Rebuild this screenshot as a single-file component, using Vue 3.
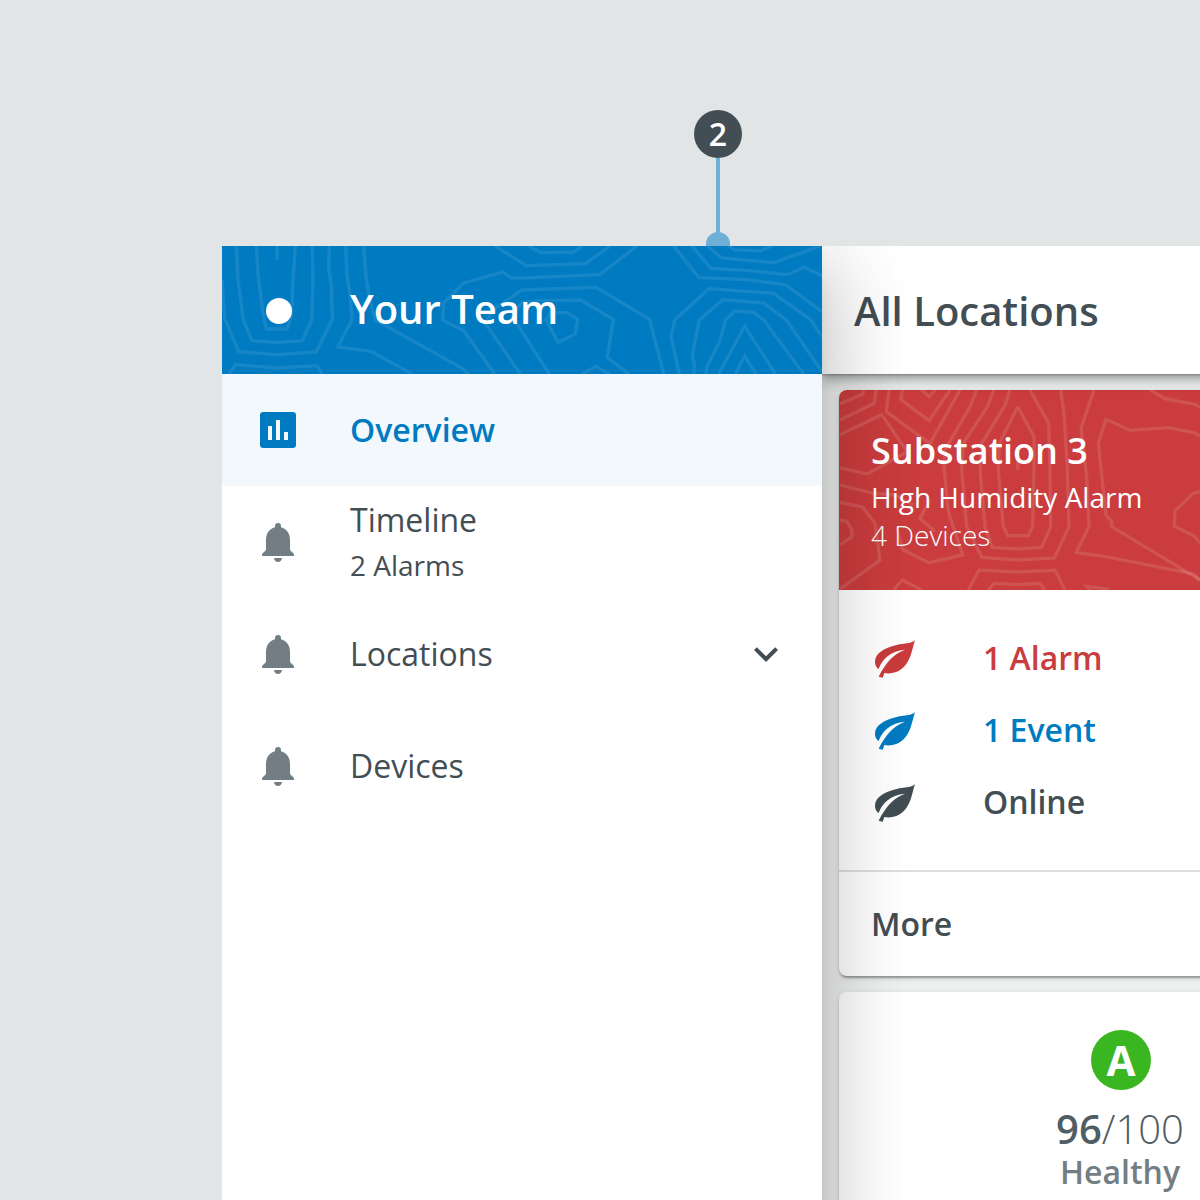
<script setup>
const nav = [
  { label: 'Timeline', sub: '2 Alarms' },
  { label: 'Locations', expandable: true },
  { label: 'Devices' },
]
const statuses = [
  { label: '1 Alarm', tone: 'alarm' },
  { label: '1 Event', tone: 'event' },
  { label: 'Online', tone: 'online' },
]
const blueContours = [
  '165,18 165,60',
  '103,18 108,100 122,215 133,267 195,267 209,225 212,140 220,18',
  '43,18 48,120 64,240 90,302 167,307 241,302 269,240 273,125 271,18',
  '0,120 8,235 50,335 167,344 283,336 331,238 328,135 320,85 322,18',
  '371,18 375,105 385,170 390,240 347,321 447,334 570,402',
  '425,18 432,110 443,180 461,240 722,386 740,402',
  '20,402 41,374 167,384 285,377 300,402',
  '820,18 912,77 1090,71 1165,18',
  '818,402 725,272 662,240 664,190 725,129 842,96 868,114 900,114 1133,104 1245,18',
  '895,402 790,250 812,210 900,150 1122,142 1283,238 1325,402',
  '982,402 900,275 870,228 900,188 960,182 1075,180 1174,238 1156,352 1220,402',
  '1008,307 972,240 985,218 1035,218 1067,238 1060,282 1008,307 972,240',
  '1080,402 1122,379 1162,402',
  '920,18 957,38 1055,36 1080,18',
  '1355,18 1431,113 1575,119 1690,134 1800,215',
  '1410,18 1467,85 1580,92 1695,104 1748,82 1800,107',
  '1455,18 1500,54 1655,68 1795,18',
  '1520,18 1537,29 1615,33 1650,18',
  '1372,402 1347,290 1358,240 1460,146 1655,160 1765,238 1800,290',
  '1415,402 1417,375 1411,345 1432,240 1502,179 1625,189 1693,240 1800,395',
  '1452,402 1455,380 1495,300 1510,240 1538,213 1595,217 1625,240 1745,402',
  '1490,402 1568,258 1660,402',
  '1540,402 1568,348 1602,402',
]
const redContours = [
  '30,72 98,42 101,30',
  '30,120 133,70 138,30',
  '30,164 155,104 232,215 112,282 30,263',
  '177,30 169,95 262,163 300,190 390,30',
  '217,30 212,58 297,122 360,30',
  '275,30 297,50 315,30',
  '440,30 420,80 345,210 342,260 355,395 398,525 297,548 217,508 200,440',
  '492,30 472,80 400,190 395,270 410,440 455,532 563,540 673,534 717,440 712,270 702,100 692,30',
  '540,30 525,75 455,190 450,270 465,440 487,502 563,507 635,502 662,440 660,270 656,130 600,30',
  '563,270 563,240',
  '563,80 508,190 505,270 520,440 533,467 595,467 608,440 612,270 612,170 563,80',
  '792,30 753,145 770,290 777,440 738,517 828,530 1092,582 1110,602',
  '30,315 130,340 195,345 250,375',
  '30,367 98,381 135,430 150,540 30,627',
  '30,420 50,424 66,450 66,470 30,495',
  '300,360 270,415 315,455',
  '190,630 217,600 275,630',
  '415,630 447,570 563,576 675,571 705,630',
  '475,630 493,610 563,614 630,610 645,630',
  '780,630 770,619 838,628',
  '960,30 1005,56 1095,73 1110,82',
  '1110,168 1092,158 1015,143 900,151 828,118 805,190 828,405 845,425 845,440 1110,600',
  '1110,335 1090,340 1035,392 1033,438 1095,470 1110,490',
]
</script>

<template>
  <div class="stage">
    <div class="callout">
      <span class="num">2</span>
      <span class="stem"></span>
      <span class="dot"></span>
    </div>
    <div class="app">
      <aside class="drawer">
        <header class="team">
          <svg class="topo" viewBox="0 18 1800 384" preserveAspectRatio="none">
            <polyline v-for="p in blueContours" :key="p" :points="p" />
          </svg>
          <span class="bullet"></span>
          <h1>Your Team</h1>
        </header>
        <nav>
          <div class="item active">
            <svg class="icon" viewBox="0 0 24 24"><path fill-rule="evenodd" d="M4.600 3h14.800A1.600 1.600 0 0 1 21 4.600v14.800a1.600 1.600 0 0 1-1.600 1.600H4.600A1.600 1.600 0 0 1 3 19.400V4.600A1.600 1.600 0 0 1 4.600 3zM7 10v7h2v-7zM11 7v10h2V7zM15 13v4h2v-4z" /></svg>
            <span class="label">Overview</span>
          </div>
          <div v-for="n in nav" :key="n.label" class="item">
            <svg class="icon" viewBox="0 0 48 48"><path d="M24 44c2.200 0 4-1.800 4-4h-8c0 2.200 1.800 4 4 4zM36 32V22c0-6.200-3.300-11.300-9-12.700V8a3 3 0 0 0-6 0v1.300C15.300 10.700 12 15.800 12 22v10l-4 4v2h32v-2z" /></svg>
            <span class="texts" :class="{ double: n.sub }">
              <span class="label">{{ n.label }}</span>
              <span v-if="n.sub" class="sub">{{ n.sub }}</span>
            </span>
            <svg v-if="n.expandable" class="chevron" viewBox="0 0 24 24"><path d="M7.410 8.590 12 13.170l4.590-4.580L18 10l-6 6-6-6z" /></svg>
          </div>
        </nav>
      </aside>
      <main>
        <header class="bar"><h2>All Locations</h2></header>
        <section class="card">
          <div class="hero">
            <svg class="topo" viewBox="27 30 1083 600" preserveAspectRatio="none">
              <polyline v-for="p in redContours" :key="p" :points="p" />
            </svg>
            <h3>Substation 3</h3>
            <p>High Humidity Alarm</p>
            <p class="thin">4 Devices</p>
          </div>
          <div class="statuses">
            <div v-for="s in statuses" :key="s.label" class="status" :class="s.tone">
              <svg viewBox="0 0 120 114"><path d="M120 1C103 15 73 7 35 25C13 35 0 48 0 66C0 76 5 84 11 87C20 60 45 32 90 29C58 41 34 64 11 110L23 113L28 99C62 105 91 89 106 49C112 33 115 14 120 1Z" /></svg>
              <span>{{ s.label }}</span>
            </div>
          </div>
          <div class="more">More</div>
        </section>
        <section class="card score">
          <span class="grade">A</span>
          <div class="points"><b>96</b>/100</div>
          <div class="health">Healthy</div>
        </section>
      </main>
    </div>
  </div>
</template>

<style>
body { margin: 0; overflow: hidden; }
</style>

<style scoped>
* { box-sizing: border-box; }
h1, h2, h3, p { margin: 0; }
.stage {
  width: 1200px;
  height: 1200px;
  overflow: hidden;
  background: #e1e5e5;
  color: #424e54;
  font-family: "Open Sans", "Noto Sans", sans-serif;
  display: flex;
  flex-direction: column;
}
.callout {
  height: 246px;
  flex: none;
  overflow: hidden;
  padding: 110px 0 0 694px;
  display: grid;
  grid-template-columns: 48px;
  grid-template-rows: 48px 74px 24px;
  justify-items: center;
}
.num {
  width: 48px;
  height: 48px;
  border-radius: 50%;
  background: #424e54;
  color: #fff;
  font: 600 32px/48px "Open Sans", sans-serif;
  text-align: center;
}
.stem { width: 4px; height: 76px; background: #6fafd6; }
.dot { width: 24px; height: 24px; border-radius: 50%; background: #6fafd6; }
.app {
  display: flex;
  width: 978px;
  height: 954px;
  margin-left: 222px;
  overflow: hidden;
  flex: none;
}
.drawer {
  position: relative;
  z-index: 2;
  width: 600px;
  height: 1100px;
  flex: none;
  background: #fff;
  box-shadow: 0 16px 20px -10px rgba(0, 0, 0, .2), 0 32px 76px 5px rgba(0, 0, 0, .14), 0 12px 90px 9px rgba(0, 0, 0, .12);
}
.team {
  position: relative;
  height: 128px;
  background: #007bc1;
  color: #fff;
  display: flex;
  align-items: center;
  padding-left: 44px;
}
.topo {
  position: absolute;
  inset: 0;
  width: 100%;
  height: 100%;
  fill: none;
  stroke: rgba(255, 255, 255, .09);
  stroke-width: 10;
}
.bullet {
  width: 26px;
  height: 26px;
  border-radius: 50%;
  background: #fff;
  margin: 2px 58px 0 0;
  z-index: 1;
}
.team h1 { z-index: 1; font-size: 40px; font-weight: 600; line-height: 54px; margin-bottom: 2px; }
.item {
  height: 112px;
  display: flex;
  align-items: center;
  padding: 0 32px;
  font-size: 32px;
}
.icon { width: 48px; height: 48px; margin-right: 48px; fill: #727e84; flex: none; }
.active { background: #f3f8fd; color: #007bc1; font-weight: 600; }
.active .icon { fill: #007bc1; }
.texts { display: flex; flex-direction: column; flex: 1; }
.texts.double { padding: 0 0 2px; }
.label { line-height: 44px; }
.sub { font-size: 28px; line-height: 38px; margin-top: 4px; }
.chevron { width: 48px; height: 48px; fill: #424e54; }
main { flex: none; width: 378px; height: 954px; background: #eef0f0; }
.bar {
  position: relative;
  z-index: 1;
  width: 720px;
  height: 128px;
  background: #fff;
  display: flex;
  align-items: center;
  padding-left: 32px;
  box-shadow: 0 1px 2px rgba(0, 0, 0, .25), 0 4px 8px -2px rgba(0, 0, 0, .2), 0 8px 10px rgba(0, 0, 0, .14), 0 2px 20px rgba(0, 0, 0, .12);
}
.bar h2 { font-size: 40px; font-weight: 600; }
.card {
  width: 720px;
  margin: 16px 0 0 17px;
  background: #fff;
  border-radius: 8px;
  box-shadow: 0 4px 2px -2px rgba(0, 0, 0, .2), 0 2px 2px rgba(0, 0, 0, .14), 0 2px 6px rgba(0, 0, 0, .12);
}
.hero {
  position: relative;
  height: 200px;
  border-radius: 8px 8px 0 0;
  overflow: hidden;
  background: #ca3c3d;
  color: #fff;
  padding: 36px 32px 0;
}
.hero .topo { width: 361px; stroke: rgba(255, 255, 255, .12); }
.hero h3 { position: relative; font-size: 36px; font-weight: 600; line-height: 50px; }
.hero p { position: relative; font-size: 28px; line-height: 38px; margin-top: 2px; }
.hero .thin { font-weight: 300; margin-top: 0; }
.statuses { height: 280px; padding: 32px 36px; }
.status { display: flex; align-items: center; height: 72px; font-size: 32px; font-weight: 600; gap: 68px; }
.status svg { width: 40px; height: 38px; fill: currentColor; margin-top: 2px; }
.status span { padding-bottom: 2px; }
.alarm { color: #ca3c3d; }
.event { color: #007bc1; }
.more {
  border-top: 2px solid #dcdfdf;
  height: 106px;
  padding-left: 32px;
  font-size: 32px;
  font-weight: 600;
  line-height: 104px;
}
.score {
  height: 400px;
  width: 564px;
  padding-top: 38px;
  display: flex;
  flex-direction: column;
  align-items: center;
}
.grade {
  width: 60px;
  height: 60px;
  border-radius: 50%;
  background: #39b620;
  color: #fff;
  font-size: 42px;
  font-weight: 700;
  line-height: 59px;
  text-align: center;
}
.points { font-size: 40px; font-weight: 300; line-height: 44px; margin: 17px 2px 0 0; color: #505d64; }
.points b { font-weight: 600; }
.health { font-size: 32px; font-weight: 600; line-height: 40px; margin: 1px 2px 0 0; color: #727e84; }
</style>
